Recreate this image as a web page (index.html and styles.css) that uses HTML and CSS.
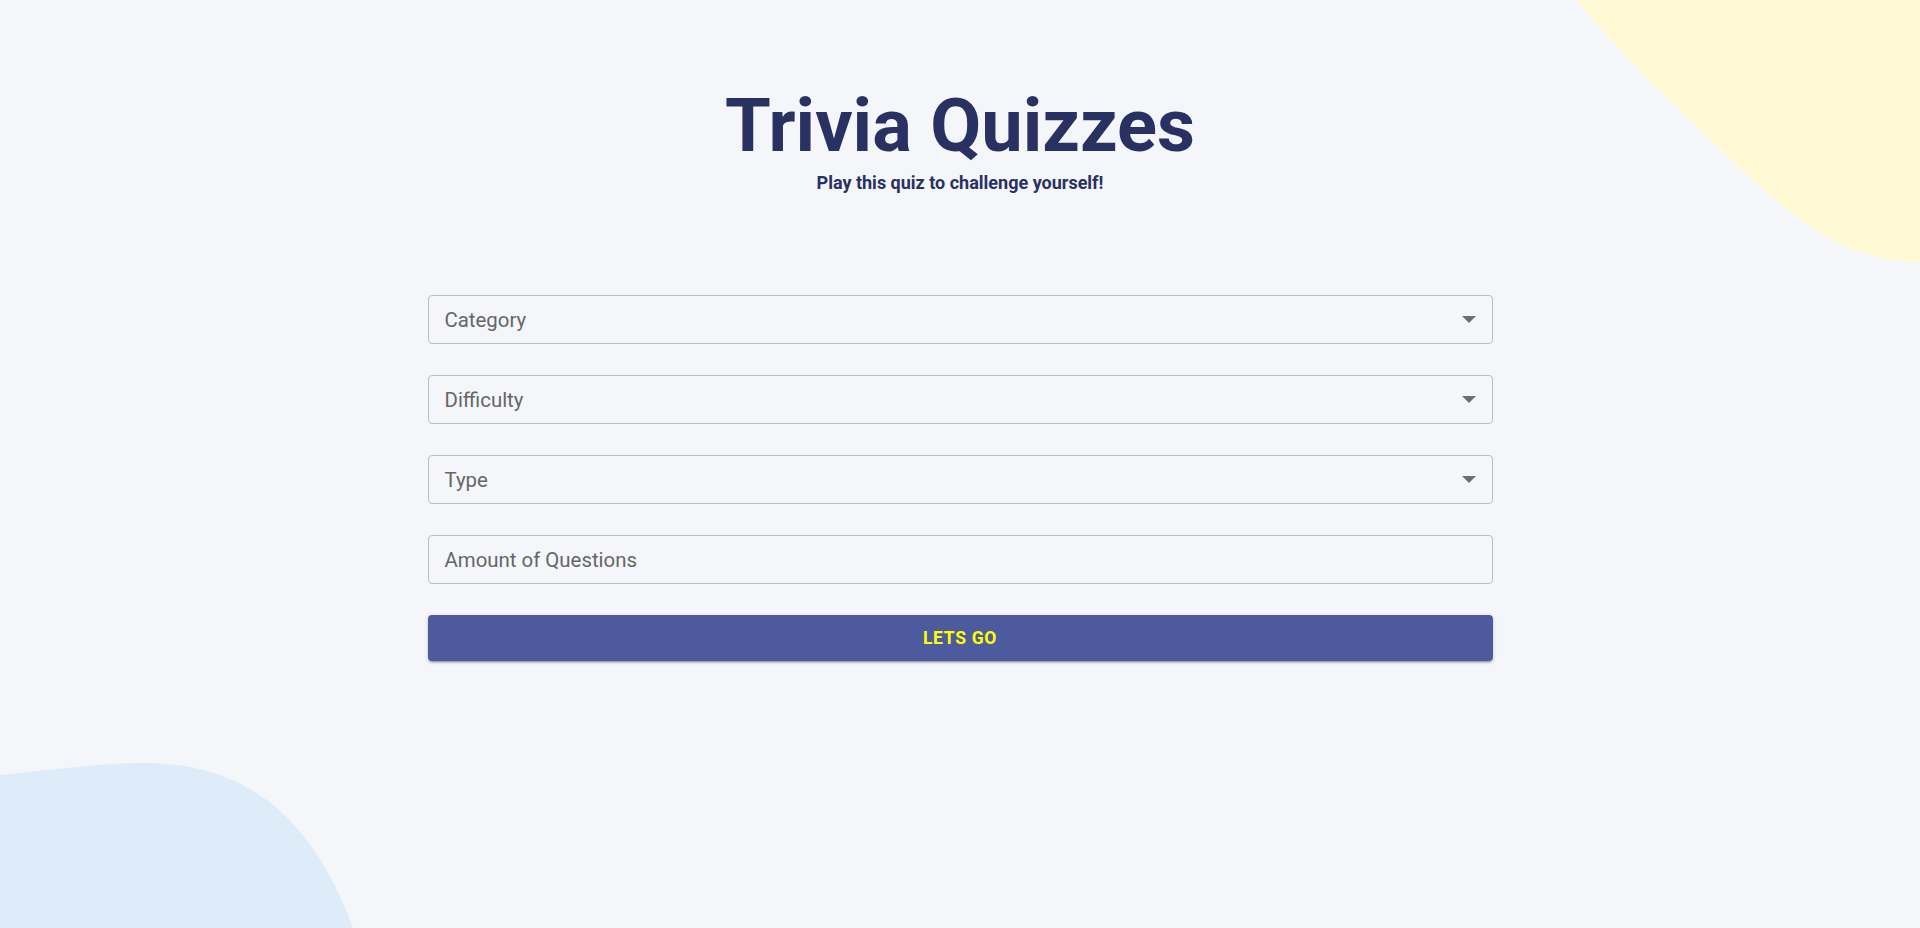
FILE: index.html
```html
<!DOCTYPE html>
<html lang="en">
<head>
<meta charset="utf-8">
<title>Trivia Quizzes</title>
<link rel="stylesheet" href="styles.css">
</head>
<body>
<svg class="blobs" width="1920" height="928" viewBox="0 0 1920 928" aria-hidden="true">
  <path class="blob-yellow" d="M1577,0 C1620,55 1680,110 1740,168 C1800,225 1850,262 1920,262 L1920,0 Z"/>
  <path class="blob-blue" d="M0,775 C60,769 110,762 150,763 C240,765 310,810 353,928 L0,928 Z"/>
</svg>
<main class="page">
  <header class="hero">
    <h1 class="title">Trivia Quizzes</h1>
    <p class="subtitle">Play this quiz to challenge yourself!</p>
  </header>
  <form class="quiz-form">
    <div class="field select">
      <span class="field-label">Category</span>
      <svg class="arrow" width="14" height="7" viewBox="0 0 14 7"><path d="M0 0 L14 0 L7 7 Z"/></svg>
    </div>
    <div class="field select">
      <span class="field-label">Difficulty</span>
      <svg class="arrow" width="14" height="7" viewBox="0 0 14 7"><path d="M0 0 L14 0 L7 7 Z"/></svg>
    </div>
    <div class="field select">
      <span class="field-label">Type</span>
      <svg class="arrow" width="14" height="7" viewBox="0 0 14 7"><path d="M0 0 L14 0 L7 7 Z"/></svg>
    </div>
    <div class="field">
      <span class="field-label">Amount of Questions</span>
    </div>
    <button type="button" class="go-btn">Lets go</button>
  </form>
</main>
</body>
</html>
```

FILE: styles.css
```css
html, body {
  margin: 0;
  padding: 0;
}
body {
  background: #f4f6fa;
  font-family: Roboto, "Liberation Sans", sans-serif;
  width: 1920px;
  height: 928px;
  overflow: hidden;
  position: relative;
}
.blobs {
  position: absolute;
  left: 0;
  top: 0;
  z-index: 0;
}
.blob-yellow { fill: #fef9d2; }
.blob-blue { fill: #deebf8; }

.page {
  position: relative;
  z-index: 1;
  display: flex;
  flex-direction: column;
  align-items: center;
}
.hero {
  display: flex;
  flex-direction: column;
  align-items: center;
  padding-top: 89px;
}
.title {
  margin: 0;
  font-size: 74px;
  line-height: 1;
  font-weight: 700;
  color: #283162;
}
.subtitle {
  margin: 11px 0 0;
  font-size: 18px;
  line-height: 1;
  font-weight: 700;
  color: #283162;
}
.quiz-form {
  width: 1065px;
  margin-top: 103px;
  display: flex;
  flex-direction: column;
  gap: 31px;
}
.field {
  box-sizing: border-box;
  height: 49px;
  border: 1px solid #bdbdbf;
  border-radius: 4px;
  display: flex;
  align-items: center;
  justify-content: space-between;
  padding: 0 16px 0 16px;
}
.field-label {
  font-size: 20.4px;
  color: #666;
}
.arrow {
  fill: #6e6e6e;
  display: block;
}
.go-btn {
  height: 46px;
  border: none;
  border-radius: 4px;
  background: #4d5a9e;
  color: #ffff00;
  font-family: Roboto, "Liberation Sans", sans-serif;
  font-size: 17.5px;
  font-weight: 700;
  text-transform: uppercase;
  letter-spacing: 0.04em;
  box-shadow: 0 3px 1px -2px rgba(0,0,0,0.2), 0 2px 2px 0 rgba(0,0,0,0.14), 0 1px 5px 0 rgba(0,0,0,0.12);
  cursor: pointer;
}
```
